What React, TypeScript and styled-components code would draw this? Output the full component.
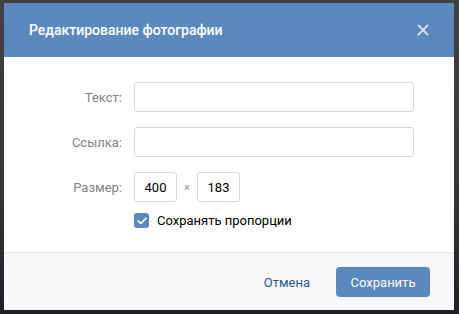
import React from "react";
import styled, { createGlobalStyle } from "styled-components";

const Global = createGlobalStyle`
  html, body { margin: 0; padding: 0; }
  body {
    background: #3a3a3c;
    font-family: Roboto, "Open Sans", "Liberation Sans", sans-serif;
    -webkit-font-smoothing: antialiased;
  }
`;

const Page = styled.div`
  width: 459px;
  height: 314px;
  background: linear-gradient(#414143 0%, #37373a 60%, #1e2026 100%);
  padding: 3px 5px 4px 4px;
  box-sizing: border-box;
`;

const Dialog = styled.div`
  width: 450px;
  height: 307px;
  display: flex;
  flex-direction: column;
  background: #fff;
  border-radius: 2px 2px 0 0;
  overflow: hidden;
`;

const Header = styled.div`
  height: 54px;
  flex: none;
  background: #5b88bd;
  display: flex;
  align-items: center;
  justify-content: space-between;
  padding: 0 25px 0 25px;
  box-sizing: border-box;
`;

const Title = styled.div`
  color: #fff;
  font-size: 14px;
  font-weight: 500;
`;

const Close = styled.button`
  border: 0;
  background: none;
  padding: 0;
  width: 12px;
  height: 12px;
  display: flex;
  cursor: pointer;
`;

const Body = styled.div`
  flex: 1;
  padding-top: 25px;
  display: grid;
  grid-template-columns: 118px 280px;
  column-gap: 12px;
  row-gap: 15px;
  align-content: start;
  align-items: center;
`;

const Label = styled.div`
  text-align: right;
  font-size: 13px;
  color: #828282;
`;

const Input = styled.div<{ $w?: number }>`
  height: 30px;
  box-sizing: border-box;
  width: ${(p) => (p.$w ? `${p.$w}px` : "100%")};
  border: 1px solid #d3d9de;
  border-radius: 3px;
  background: #fff;
  font-size: 13px;
  color: #000;
  display: flex;
  align-items: center;
  justify-content: center;
`;

const SizeRow = styled.div`
  display: flex;
  align-items: center;
`;

const Times = styled.span`
  width: 20px;
  text-align: center;
  color: #939393;
  font-size: 11px;
`;

const CheckRow = styled.label`
  grid-column: 2;
  margin-top: -4px;
  display: flex;
  align-items: center;
  gap: 8px;
  font-size: 13px;
  color: #000;
`;

const Box = styled.span`
  width: 15px;
  height: 15px;
  border-radius: 3px;
  background: #5b88bd;
  display: flex;
  align-items: center;
  justify-content: center;
`;

const Footer = styled.div`
  height: 58px;
  flex: none;
  background: #f7f8fa;
  border-top: 1px solid #e7e8ec;
  box-sizing: border-box;
  display: flex;
  align-items: flex-start;
  justify-content: flex-end;
  padding: 14px 24px 0 0;
  gap: 26px;
`;

const Cancel = styled.button`
  border: 0;
  background: none;
  padding: 0;
  height: 30px;
  font-family: inherit;
  font-size: 13px;
  color: #2a5885;
  cursor: pointer;
`;

const Save = styled.button`
  border: 0;
  width: 94px;
  height: 30px;
  border-radius: 4px;
  background: #5b88bd;
  color: #fff;
  font-family: inherit;
  font-size: 13px;
  cursor: pointer;
`;

export default function App() {
  return (
    <>
      <Global />
      <Page>
        <Dialog>
          <Header>
            <Title>Редактирование фотографии</Title>
            <Close aria-label="Закрыть">
              <svg width="12" height="12" viewBox="0 0 12 12">
                <path d="M1.5 1.5 L10.5 10.5 M10.5 1.5 L1.5 10.5" stroke="#d6e1ef" strokeWidth="1.8" strokeLinecap="round" />
              </svg>
            </Close>
          </Header>
          <Body>
            <Label>Текст:</Label>
            <Input />
            <Label>Ссылка:</Label>
            <Input />
            <Label>Размер:</Label>
            <SizeRow>
              <Input $w={43}>400</Input>
              <Times>×</Times>
              <Input $w={43}>183</Input>
            </SizeRow>
            <CheckRow>
              <Box>
                <svg width="10" height="8" viewBox="0 0 10 8">
                  <path d="M1.2 4 L3.8 6.5 L8.8 1.3" fill="none" stroke="#fff" strokeWidth="1.7" strokeLinecap="round" strokeLinejoin="round" />
                </svg>
              </Box>
              Сохранять пропорции
            </CheckRow>
          </Body>
          <Footer>
            <Cancel>Отмена</Cancel>
            <Save>Сохранить</Save>
          </Footer>
        </Dialog>
      </Page>
    </>
  );
}
